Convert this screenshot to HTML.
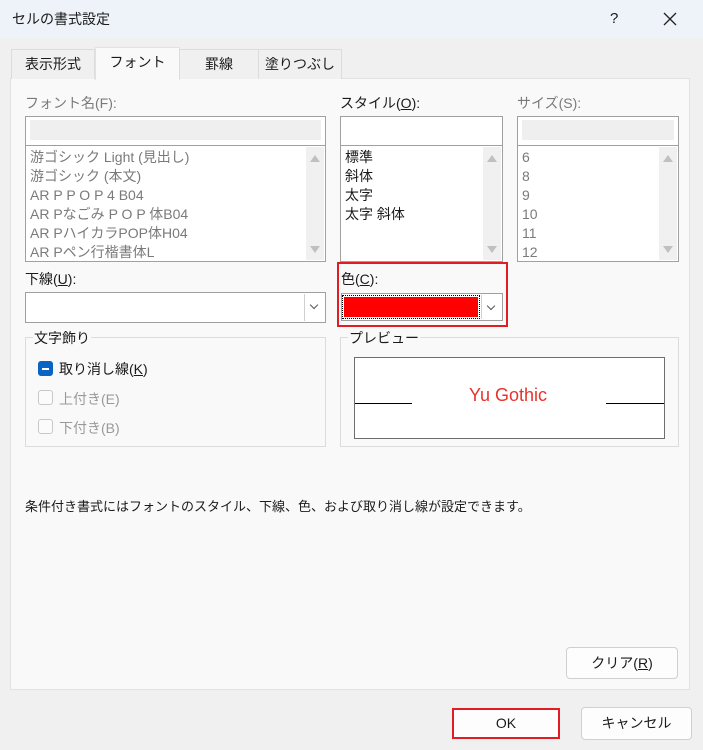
<!DOCTYPE html>
<html><head><meta charset="utf-8"><style>
*{box-sizing:border-box;margin:0;padding:0}
body{width:703px;height:750px;background:#f0f0f0;font-family:"Liberation Sans","Noto Sans CJK JP",sans-serif;font-size:14px;color:#1a1a1a;position:relative;overflow:hidden}
.a{position:absolute;white-space:nowrap}
.title{left:0;top:0;width:703px;height:38px;background:#edf3f8}
.tab{position:absolute;top:49px;height:30px;border:1px solid #dcdcdc;border-bottom:none;background:#f0f0f0;text-align:center;line-height:28px;font-size:14px}
.panel{left:10px;top:78px;width:680px;height:612px;background:#f9f9f9;border:1px solid #e2e2e2}
.box{position:absolute;background:#fff;border:1px solid #a0a0a0}
.g{color:#7a7a7a}
.sb{position:absolute;top:1px;bottom:1px;right:1px;width:18px;background:#f0f0f0}
.up,.dn{position:absolute;left:4px;width:0;height:0;border-left:5px solid transparent;border-right:5px solid transparent}
.up{top:8px;border-bottom:7px solid #c0c0c0}
.dn{bottom:7px;border-top:7px solid #c0c0c0}
.li{position:absolute;left:4px;line-height:19px}
.grp{position:absolute;border:1px solid #dcdcdc}
.leg{position:absolute;top:-10px;left:7px;background:#f9f9f9;padding:0 1px;font-size:14px}
.cb{position:absolute;width:15px;height:15px;border:1px solid #c8c8c8;border-radius:3px;background:#fbfbfb}
.btn{position:absolute;background:#fdfdfd;border:1px solid #d0d0d0;border-radius:4px;text-align:center;font-size:14px}
.dd{position:absolute;right:1px;top:1px;bottom:1px;width:20px;border-left:1px solid #d0d0d0;background:#fff}
.dd:after{content:"";position:absolute;left:6px;top:8px;width:5px;height:5px;border-right:1px solid #555;border-bottom:1px solid #555;transform:rotate(45deg)}
u{text-decoration:underline}
</style></head><body>
<div class="a title"></div>
<div class="a" style="left:12px;top:9px;font-size:14px">セルの書式設定</div>
<div class="a" style="left:610px;top:10px;font-size:15px">?</div>
<svg class="a" style="left:663px;top:12px" width="14" height="14"><path d="M1 1L13 13M13 1L1 13" stroke="#222" stroke-width="1.3"/></svg>

<div class="a panel"></div>
<div class="tab" style="left:11px;width:84px">表示形式</div>
<div class="tab" style="left:95px;width:85px;top:47px;height:33px;background:#f9f9f9;border-color:#e2e2e2">フォント</div>
<div class="tab" style="left:179px;width:80px">罫線</div>
<div class="tab" style="left:258px;width:84px">塗りつぶし</div>

<div class="a g" style="left:25px;top:93px">フォント名(F):</div>
<div class="box" style="left:25px;top:116px;width:301px;height:30px"><div style="position:absolute;left:4px;top:3px;right:4px;bottom:5px;background:#efefef"></div></div>
<div class="box" style="left:25px;top:145px;width:301px;height:117px">
<div class="sb"><div class="up"></div><div class="dn"></div></div>
<div class="li g" style="top:2px">游ゴシック Light (見出し)</div>
<div class="li g" style="top:21px">游ゴシック (本文)</div>
<div class="li g" style="top:40px">AR P P O P 4 B04</div>
<div class="li g" style="top:59px">AR Pなごみ P O P 体B04</div>
<div class="li g" style="top:78px">AR PハイカラPOP体H04</div>
<div class="li g" style="top:97px">AR Pペン行楷書体L</div>
</div>

<div class="a" style="left:340px;top:93px">スタイル(<u>O</u>):</div>
<div class="box" style="left:340px;top:116px;width:163px;height:30px"></div>
<div class="box" style="left:340px;top:145px;width:163px;height:117px">
<div class="sb"><div class="up"></div><div class="dn"></div></div>
<div class="li" style="top:2px">標準</div>
<div class="li" style="top:21px">斜体</div>
<div class="li" style="top:40px">太字</div>
<div class="li" style="top:59px">太字 斜体</div>
</div>

<div class="a g" style="left:517px;top:93px">サイズ(S):</div>
<div class="box" style="left:517px;top:116px;width:162px;height:30px"><div style="position:absolute;left:4px;top:3px;right:4px;bottom:5px;background:#efefef"></div></div>
<div class="box" style="left:517px;top:145px;width:162px;height:117px">
<div class="sb"><div class="up"></div><div class="dn"></div></div>
<div class="li g" style="top:2px">6</div>
<div class="li g" style="top:21px">8</div>
<div class="li g" style="top:40px">9</div>
<div class="li g" style="top:59px">10</div>
<div class="li g" style="top:78px">11</div>
<div class="li g" style="top:97px">12</div>
</div>

<div class="a" style="left:25px;top:269px">下線(<u>U</u>):</div>
<div class="box" style="left:25px;top:292px;width:301px;height:31px"><div class="dd"></div></div>

<div class="a" style="left:337px;top:262px;width:171px;height:65px;border:2px solid #e21c24"></div>
<div class="a" style="left:341px;top:269px">色(<u>C</u>):</div>
<div class="box" style="left:341px;top:293px;width:162px;height:28px"><div style="position:absolute;left:2px;top:3px;width:134px;height:20px;background:#ff0000;outline:1px dotted #000;outline-offset:1px"></div><div class="dd"></div></div>

<div class="grp" style="left:25px;top:337px;width:301px;height:110px"><div class="leg">文字飾り</div></div>
<div class="cb" style="left:38px;top:361px;background:#0863c4;border-color:#0863c4"><div style="position:absolute;left:3px;top:6px;width:7px;height:2px;background:#fff"></div></div>
<div class="a" style="left:59px;top:359px">取り消し線(<u>K</u>)</div>
<div class="cb" style="left:38px;top:390px"></div>
<div class="a g" style="left:59px;top:389px;color:#999">上付き(E)</div>
<div class="cb" style="left:38px;top:419px"></div>
<div class="a g" style="left:59px;top:418px;color:#999">下付き(B)</div>

<div class="grp" style="left:340px;top:337px;width:339px;height:110px"><div class="leg">プレビュー</div></div>
<div class="box" style="left:354px;top:357px;width:311px;height:82px;border-color:#6e6e6e"></div>
<div class="a" style="left:355px;top:403px;width:57px;height:1px;background:#000"></div>
<div class="a" style="left:606px;top:403px;width:58px;height:1px;background:#000"></div>
<div class="a" style="left:469px;top:385px;font-size:18px;color:#e8322e">Yu Gothic</div>

<div class="a" style="left:25px;top:496px;font-size:13px">条件付き書式にはフォントのスタイル、下線、色、および取り消し線が設定できます。</div>

<div class="btn" style="left:566px;top:647px;width:112px;height:32px;line-height:30px">クリア(<u>R</u>)</div>
<div class="btn" style="left:452px;top:708px;width:108px;height:31px;line-height:27px;border:2px solid #e21c24;border-radius:0">OK</div>
<div class="btn" style="left:581px;top:707px;width:111px;height:33px;line-height:31px">キャンセル</div>
</body></html>
